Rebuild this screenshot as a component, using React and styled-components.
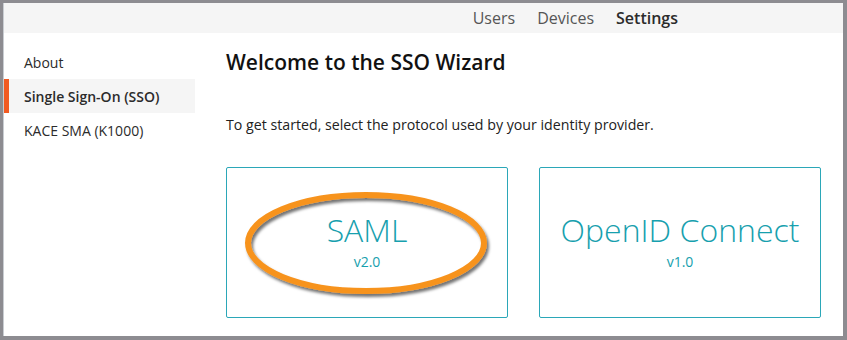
import React from 'react'
import styled, { createGlobalStyle } from 'styled-components'

const GlobalStyle = createGlobalStyle`
  html, body {
    margin: 0;
    padding: 0;
    background: #8d8c91;
    font-family: "Open Sans", "Liberation Sans", sans-serif;
  }
`

const Frame = styled.div`
  width: 847px;
  height: 340px;
  box-sizing: border-box;
  padding: 3px 4px 4px 3px;
`

const Window = styled.div`
  height: 100%;
  background: #fff;
  border-left: 1px solid #c9cdd2;
  display: flex;
  flex-direction: column;
  overflow: hidden;
`

const TopBar = styled.div`
  height: 30px;
  background: #f5f5f5;
  display: flex;
  justify-content: flex-end;
  align-items: center;
  gap: 22px;
  padding-right: 165px;
`

const NavLink = styled.span`
  font-size: 16px;
  color: ${p => (p.active ? '#2b2b2b' : '#555')};
  font-weight: ${p => (p.active ? 600 : 400)};
`

const Body = styled.div`
  flex: 1;
  display: flex;
`

const Sidebar = styled.div`
  width: 191px;
  padding-top: 12px;
  display: flex;
  flex-direction: column;
`

const SideItem = styled.div`
  height: 34px;
  display: flex;
  align-items: center;
  padding-left: 15px;
  border-left: 5px solid ${p => (p.active ? '#f15a22' : 'transparent')};
  background: ${p => (p.active ? '#f5f5f5' : 'transparent')};
  font-size: 14px;
  font-weight: ${p => (p.active ? 600 : 400)};
  color: #2b2b2b;
`

const Main = styled.div`
  flex: 1;
  padding: 15px 0 0 31px;
`

const Title = styled.h1`
  margin: 0;
  font-size: 21px;
  font-weight: 600;
  color: #111;
  line-height: 28px;
`

const Lead = styled.p`
  margin: 39px 0 0;
  font-size: 14.2px;
  color: #222;
  line-height: 20px;
`

const Cards = styled.div`
  display: flex;
  gap: 31px;
  margin-top: 32px;
`

const Card = styled.div`
  position: relative;
  width: 282px;
  height: 151px;
  box-sizing: border-box;
  border: 1px solid #2ba7b8;
  border-radius: 2px;
  display: flex;
  flex-direction: column;
  align-items: center;
  justify-content: center;
  color: #17a0ae;
`

const Protocol = styled.div`
  font-size: 32px;
  font-weight: 300;
  line-height: 40px;
  margin-top: -4px;
`

const Version = styled.div`
  font-size: 14px;
  line-height: 18px;
  margin-top: 3px;
`

const Highlight = styled.svg`
  position: absolute;
  left: 16px;
  top: 22px;
  width: 250px;
  height: 110px;
  pointer-events: none;
`

const Ellipse = () => (
  <Highlight viewBox="0 0 250 110">
    <defs>
      <filter id="shadow" x="-10%" y="-20%" width="120%" height="140%">
        <feDropShadow dx="2" dy="3" stdDeviation="1.6" floodColor="#000" floodOpacity="0.55" />
      </filter>
    </defs>
    <ellipse cx="123" cy="53" rx="118" ry="48" fill="none" stroke="#f7931e" strokeWidth="6" filter="url(#shadow)" />
  </Highlight>
)

export default function App() {
  return (
    <Frame>
      <GlobalStyle />
      <Window>
        <TopBar>
          <NavLink>Users</NavLink>
          <NavLink>Devices</NavLink>
          <NavLink active>Settings</NavLink>
        </TopBar>
        <Body>
          <Sidebar>
            <SideItem>About</SideItem>
            <SideItem active>Single Sign-On (SSO)</SideItem>
            <SideItem>KACE SMA (K1000)</SideItem>
          </Sidebar>
          <Main>
            <Title>Welcome to the SSO Wizard</Title>
            <Lead>To get started, select the protocol used by your identity provider.</Lead>
            <Cards>
              <Card>
                <Protocol>SAML</Protocol>
                <Version>v2.0</Version>
                <Ellipse />
              </Card>
              <Card>
                <Protocol>OpenID Connect</Protocol>
                <Version>v1.0</Version>
              </Card>
            </Cards>
          </Main>
        </Body>
      </Window>
    </Frame>
  )
}
